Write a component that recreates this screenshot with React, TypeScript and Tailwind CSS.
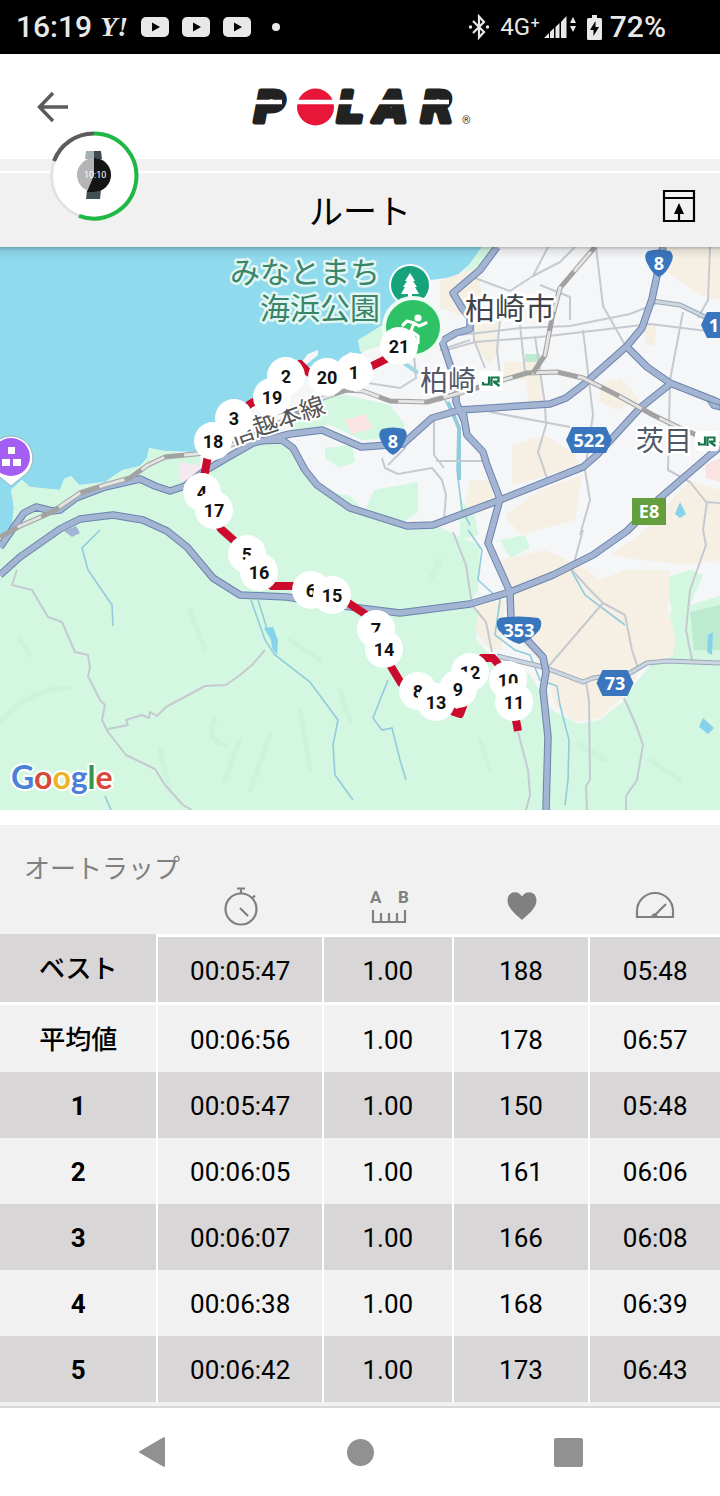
import React from "react";
import { twMerge } from "tailwind-merge";

type Lap = {
  label: string;
  time: string;
  distance: string;
  heartRate: string;
  pace: string;
};

const laps: Lap[] = [
  { label: "ベスト", time: "00:05:47", distance: "1.00", heartRate: "188", pace: "05:48" },
  { label: "平均値", time: "00:06:56", distance: "1.00", heartRate: "178", pace: "06:57" },
  { label: "1", time: "00:05:47", distance: "1.00", heartRate: "150", pace: "05:48" },
  { label: "2", time: "00:06:05", distance: "1.00", heartRate: "161", pace: "06:06" },
  { label: "3", time: "00:06:07", distance: "1.00", heartRate: "166", pace: "06:08" },
  { label: "4", time: "00:06:38", distance: "1.00", heartRate: "168", pace: "06:39" },
  { label: "5", time: "00:06:42", distance: "1.00", heartRate: "173", pace: "06:43" },
];

// in stacking order, later pins cover earlier ones
const pins: [label: string, x: number, y: number][] = [
  ["21", 399, 346],
  ["1", 354, 372],
  ["2", 286, 376],
  ["20", 327, 377],
  ["19", 272, 397],
  ["3", 234, 418],
  ["18", 213, 441],
  ["4", 202, 492],
  ["17", 214, 510],
  ["5", 247, 554],
  ["16", 259, 572],
  ["6", 311, 590],
  ["15", 332, 595],
  ["7", 376, 629],
  ["14", 384, 649],
  ["12", 470, 672],
  ["9", 458, 689],
  ["8", 418, 691],
  ["13", 436, 702],
  ["10", 508, 680],
  ["11", 514, 702],
];

const mainRoads = [
  "M0 547L14 527 24 513 36 507 52 511 60 510 76 498 105 487 140 479 155 486 170 491 185 486 203 472 225 459 253 443 290 434 322 430 361 447 403 444 432 418 460 410 550 404 566 398 583 385 627 346 642 328 652 299 663 247",
  "M253 441L282 440 293 448 305 470 317 485 350 508 407 526 433 525 500 500 583 467 597 455 640 408 670 384",
  "M627 347L647 367 670 383 713 400 720 403",
  "M0 575L20 557 60 529 80 519 113 515 143 520 167 531 187 547 213 578 240 595 287 597 343 606 400 613 470 604 510 592 553 575 593 555 627 531 660 498 710 455 720 447",
  "M463 412L467 435 483 452 487 465 500 499 488 543 510 592 511 620 530 643 543 657 546 672 543 690 548 737 546 810",
  "M497 247L480 270 453 293 462 308 470 318 470 329 456 333 442 341 450 365 456 380 456 402 464 420",
];

const cityStreets = [
  "M475 278L510 291 533 276 548 247",
  "M533 276L560 262 575 247",
  "M460 335L520 328 570 326 630 314 660 302",
  "M447 350L475 342 540 337 600 330 650 324 715 332",
  "M540 285L570 297 570 320",
  "M596 247L603 306 625 345",
  "M473 320L474 340 485 368",
  "M500 320L497 350 500 375",
  "M520 325L525 372",
  "M535 336L545 405 546 425 538 452 547 478",
  "M583 330L593 415 585 470 590 500 580 535",
  "M683 312L670 380 668 470 690 482 706 502 720 503",
  "M490 412L570 427",
  "M710 247L708 300 698 318",
  "M382 458L385 468 398 474 432 468 442 480 446 495 444 520",
  "M388 465L406 447",
  "M434 420L434 455 444 468",
  "M436 461L486 461",
  "M368 383L400 388 416 378 414 355",
  "M440 350L470 340",
  "M707 502L703 530 706 545 690 590 686 630 692 660",
  "M583 530L572 570 590 590 603 603 625 615 632 650 638 668",
  "M603 603L548 667",
  "M586 682L589 700 590 780 586 786 587 810",
  "M624 698L636 725 643 745 637 780 626 796 626 810",
  "M453 532L466 565 472 605 486 622 492 652",
  "M518 732L528 770 530 795 526 810",
  "M17 570L12 585 32 590 48 617 62 622 75 652 88 655 90 668 88 676 100 700 105 705 102 720 108 732 126 755 155 769 165 785 183 805 192 810",
  "M108 729L128 725 126 720 142 715 149 718 150 712 157 716 166 707 205 686 226 685 240 675 252 665 265 650",
];

const streams = [
  "M100 530L82 548 88 570 112 605 113 626",
  "M251 600L265 640 275 655 310 682 338 720 333 745 335 775 353 800",
  "M258 600L268 632",
  "M388 680L373 718 382 730 392 728 400 760 406 780",
  "M468 530L482 550 478 580 500 600 495 635 515 650 530 655 540 680 557 686 560 705 569 740 568 780 565 805",
  "M445 400L458 425 457 470 462 510 470 525",
  "M571 570L585 595 605 610 625 625",
  "M105 796L111 810",
];

const railways = [
  "M0 537L20 526 52 512 80 493 105 485 130 478 148 465 165 457 205 453 240 442 285 420 323 398 347 390 363 391 390 401 427 402 453 395 503 380 527 373 557 372 583 378 617 395 653 415 680 428 720 445",
  "M533 373L545 355 552 318 560 288 577 268 595 247",
];

const route =
  "M399 352L386 359 370 367 327 385 308 372 300 364 286 385 250 404 225 425 209 450 205 472 200 492 221 529 247 552 262 580 272 586 293 586 332 592 365 614 384 655 401 683 436 702 454 712 460 714 463 706 470 672 482 658 493 658 505 672 514 702 516 720 518 731";

function StatusBar() {
  return (
    <div className="flex h-[54px] items-center justify-between bg-black pl-4 pr-[54px] text-[#e8e8e8]">
      <div className="flex items-center gap-[13px]">
        <div className="flex items-center gap-2">
          <span className="text-[30px] leading-none font-medium">16:19</span>
          <span className="font-['Liberation_Serif',serif] text-[28px] leading-none font-bold italic">
            Y!
          </span>
        </div>
        <VideoIcon />
        <VideoIcon />
        <VideoIcon />
        <span className="ml-2 h-2 w-2 rounded-full bg-[#e8e8e8]" />
      </div>
      <div className="flex items-center gap-[10px]">
        <svg width="22" height="26" viewBox="0 0 22 26" fill="none" stroke="currentColor" strokeWidth="2.2">
          <path d="M5 7L16 18 11 23.500V2.500L16 8 5 19" />
          <circle cx="2.500" cy="13" r="1.700" fill="currentColor" stroke="none" />
          <circle cx="19.500" cy="13" r="1.700" fill="currentColor" stroke="none" />
        </svg>
        <div className="flex items-center gap-1">
          <span className="text-[24px] leading-none">4G⁺</span>
          <svg width="33" height="24" viewBox="0 0 33 24" fill="currentColor">
            <path d="M0 23L5 18V23ZM6 17L10 13V23H6ZM11.500 12L15.500 8V23H11.500ZM17 7L22.500 1V23H17ZM26 8L29 2 32 8ZM26 11H32L29 17Z" />
          </svg>
        </div>
        <div className="flex items-center gap-2">
          <svg width="15" height="25" viewBox="0 0 15 25">
            <path d="M5 0H10V3H13.500Q15 3 15 4.500V23.500Q15 25 13.500 25H1.500Q0 25 0 23.500V4.500Q0 3 1.500 3H5Z" fill="currentColor" />
            <path d="M8.500 6L3 15H6.500V21L12 12H8.500Z" fill="#000" />
          </svg>
          <span className="text-[30px] leading-none font-medium">72%</span>
        </div>
      </div>
    </div>
  );
}

function VideoIcon() {
  return (
    <svg width="28" height="20" viewBox="0 0 28 20">
      <rect width="28" height="20" rx="5" fill="#e8e8e8" />
      <path d="M11 5.500L19 10 11 14.500Z" fill="#000" />
    </svg>
  );
}

function PolarLogo() {
  return (
    <svg width="232" height="64" viewBox="244 74 232 64" role="img" aria-label="POLAR">
      <g
        className="font-['DejaVu_Sans',sans-serif] text-[42px] font-bold italic"
        fill="#222"
        stroke="#222"
        strokeWidth="5"
        strokeLinejoin="round"
      >
        <text x="254" y="121">P</text>
        <text x="337" y="121">L</text>
        <text x="375" y="121">A</text>
        <text x="421" y="121">R</text>
      </g>
      <circle cx="315.500" cy="106" r="18.500" fill="#e8173a" />
      <path d="M252 101H282M296 101H335M338 101H413M419 101H449" stroke="#fff" strokeWidth="4.500" />
      <text x="462" y="123" className="text-[11px]" fill="#333">
        ®
      </text>
    </svg>
  );
}

function WatchBadge() {
  return (
    <svg
      className="absolute left-[48px] top-[130px]"
      width="92"
      height="92"
      viewBox="0 0 92 92"
      fill="none"
    >
      <circle cx="46" cy="46" r="44" fill="#fff" />
      <circle cx="46" cy="46" r="42.500" stroke="#e2e2e2" strokeWidth="3" />
      <path d="M46 3.500A42.500 42.500 0 1 1 31 85.800" stroke="#1fb845" strokeWidth="4" />
      <path d="M6 31A42.500 42.500 0 0 1 46 3.500" stroke="#5c5c5c" strokeWidth="4" />
      <path d="M38 21H46V29H37Z" fill="#a4b0b1" />
      <path d="M46 21H53L54 29H46Z" fill="#3d4c50" />
      <path d="M39 60H53L52 69H38Z" fill="#3f5055" />
      <circle cx="46" cy="45" r="17" fill="#b5b5b5" />
      <path d="M46 28A17 17 0 0 1 46 62H39L46 45Z" fill="#151515" />
      <text x="36" y="48" className="text-[9px]" fill="#fff">
        10:10
      </text>
    </svg>
  );
}

function HexShield({ x, y, width, label }: { x: number; y: number; width: number; label: string }) {
  const w = width / 2;
  return (
    <g>
      <path
        d={`M${x - w} ${y}L${x - w + 6} ${y - 13}H${x + w - 6}L${x + w} ${y}L${x + w - 6} ${y + 13}H${x - w + 6}Z`}
        fill="#3a76bd"
      />
      <ShieldText x={x} y={y + 7} label={label} />
    </g>
  );
}

function RouteShield({ x, y, width, label }: { x: number; y: number; width: number; label: string }) {
  const w = width / 2;
  return (
    <g>
      <path
        d={`M${x - w + 3} ${y - 12}Q${x} ${y - 15} ${x + w - 3} ${y - 12}Q${x + w + 2} ${y - 8} ${x + w - 2} ${y}Q${x + w * 0.5} ${y + 11} ${x} ${y + 14}Q${x - w * 0.5} ${y + 11} ${x - w + 2} ${y}Q${x - w - 2} ${y - 8} ${x - w + 3} ${y - 12}Z`}
        fill="#3a76bd"
      />
      <ShieldText x={x} y={y + 7} label={label} />
    </g>
  );
}

function ShieldText({ x, y, label }: { x: number; y: number; label: string }) {
  return (
    <text x={x} y={y} textAnchor="middle" fill="#fff" className="font-['Noto_Sans',sans-serif] text-[18px] font-bold">
      {label}
    </text>
  );
}

function StationMark({ x, y }: { x: number; y: number }) {
  return (
    <g>
      <rect x={x - 12} y={y - 10} width="24" height="20" rx="4" fill="#fff" />
      <path
        d={`M${x - 8} ${y + 1}V${y + 3.5}H${x - 2}V${y - 4.5}M${x + 0.5} ${y + 5}V${y - 3.5}H${x + 7.5}V${y + 0.5}H${x + 2}M${x + 3} ${y + 1}L${x + 8.5} ${y + 5}`}
        fill="none"
        stroke="#14784a"
        strokeWidth="2.2"
      />
    </g>
  );
}

function RouteMap() {
  return (
    <svg className="block h-auto w-full" viewBox="0 247 720 563">
      <defs>
        <linearGradient id="topShade" x1="0" y1="0" x2="0" y2="1">
          <stop offset="0" stopColor="#000" stopOpacity="0.25" />
          <stop offset="0.3" stopColor="#000" stopOpacity="0.08" />
          <stop offset="1" stopColor="#000" stopOpacity="0" />
        </linearGradient>
      </defs>
      <rect y="247" width="720" height="563" fill="#90daee" />
      {/* land */}
      <path
        d="M0 538L12 525 14 507 11 490 22 480 30 487 60 490 64 479 71 476 79 485 105 482 115 475 123 470 140 466 147 458 149 448 165 451 195 452 212 440 230 418 262 392 278 358 284 366 300 364 308 354 318 350 318 355 302 368 340 362 350 352 360 355 366 345 390 320 410 300 430 280 455 277 470 264 482 247H720V810H0Z"
        fill="#f5f6f8"
      />
      <path
        d="M0 538L12 525 14 507 11 490 22 480 30 487 60 490 64 479 71 476 79 485 105 482 115 475 123 470 140 466 147 458 149 448 165 451 200 455 200 472 220 466 250 443 284 442 300 465 325 491 350 496 362 508 385 520 440 527 455 535 480 545 478 590 472 600 478 615 476 640 490 655 530 675 552 710 578 724 600 720 625 700 634 685 650 666 674 655 664 630 672 610 664 578 690 570 703 575 690 605 720 596V810H0Z"
        fill="#d3f7e1"
      />
      <g fill="#d3f7e1">
        <path d="M482 247H500L478 272 460 288 458 280Z" />
        <path d="M358 340L384 324 384 345 360 352Z" />
        <path d="M310 398L345 395 390 405 405 425 400 438 362 440 330 425 290 430Z" />
        <path d="M374 490L418 482 418 512 400 524 366 508Z" />
        <path d="M325 448L352 445 355 462 340 468 325 458Z" />
        <path d="M460 500L475 515 478 535 460 540Z" />
        <path d="M500 540L525 535 530 548 510 558Z" />
        <path d="M525 354H540V370H525Z" fill="#bdebd0" />
        <path d="M690 612L720 605V650H694Z" fill="#bdebd0" />
      </g>
      <g fill="#f6f0e4">
        <path d="M440 280L478 268 482 295 460 315 440 308Z" />
        <path d="M472 325L500 322 500 350 490 365 474 345Z" />
        <path d="M504 362H542V402H528L526 380 504 378Z" />
        <path d="M664 247H720V300L700 295 664 270Z" />
        <path d="M645 325L656 325 655 345 645 345Z" />
        <path d="M600 385L620 378 640 400 618 410 600 402Z" />
        <path d="M512 445L545 435 575 455 580 465 512 486Z" />
        <path d="M540 490L582 475 575 520 520 535 505 515Z" />
        <path d="M470 480L490 480 495 500 480 515 465 505Z" />
        <path d="M500 560L545 550 580 565 600 580 625 570 670 570 668 610 676 640 672 655 640 668 630 690 600 718 575 722 555 705 545 668 510 630 514 595Z" />
        <path d="M640 535L690 480 720 490V560L690 565 640 560 610 555Z" />
        <path d="M478 605L505 600 502 650 488 648 476 632Z" />
      </g>
      <g fill="#fbe3e4">
        <path d="M345 420L365 414 373 428 352 434Z" />
        <path d="M705 465L720 458V482L706 478Z" />
        <path d="M179 462L200 466 200 478 180 482Z" fill="#f6e8ef" />
      </g>
      {/* forest relief */}
      <g fill="none" stroke="#c3ecd6" strokeWidth="5" strokeLinecap="round" opacity="0.35">
        <path d="M2 720Q30 688 70 688M20 640L30 655M190 610L205 650M215 720Q205 740 225 745M240 740L225 780M270 735L250 790M300 710L310 770M340 690L350 720M290 640L320 660M440 560L430 580M160 750L170 790M650 760L680 780M480 740L490 770M580 745L605 760" />
      </g>
      <g fill="none" stroke="#92cbdc" strokeWidth="1.600">
        {streams.map((d) => (
          <path key={d} d={d} />
        ))}
        <path d="M448 402L459 428 459 480" strokeWidth="4" />
        <path d="M404 363L418 373" strokeWidth="4" stroke="#9bdbe6" />
      </g>
      <g fill="#85d2ea">
        <path d="M264 628L273 627 278 640 277 655 272 648 271 640Z" />
        <path d="M680 502L686 514 680 518 675 514Z" />
        <path d="M703 718L714 728 708 734 699 727Z" />
        <path d="M708 635L713 632 712 655 707 652Z" />
      </g>
      <g fill="none" stroke="#c5cad1" strokeWidth="2" strokeLinejoin="round">
        {cityStreets.map((d) => (
          <path key={d} d={d} />
        ))}
      </g>
      <g fill="none" strokeLinejoin="round">
        <path d="M497 656L543 667 583 682 593 678 630 673 647 663 667 661 720 663M652 301L680 305 705 317" stroke="#9aa8b8" strokeWidth="5" />
        <path d="M497 656L543 667 583 682 593 678 630 673 647 663 667 661 720 663M652 301L680 305 705 317" stroke="#ccd6e0" strokeWidth="3" />
      </g>
      <g fill="none" strokeLinejoin="round">
        <g stroke="#6c83ad" strokeWidth="7.500">
          {mainRoads.map((d) => (
            <path key={d} d={d} />
          ))}
        </g>
        <g stroke="#a3b5d3" strokeWidth="5.500">
          {mainRoads.map((d) => (
            <path key={d} d={d} />
          ))}
        </g>
        <path d="M64 531L72 537 80 533 76 526Z" fill="#a3b5d3" />
        <path d="M707 401L720 405V410L712 408Z" fill="#a3b5d3" stroke="#6c83ad" />
      </g>
      <g fill="none" strokeLinejoin="round">
        {railways.map((d) => (
          <g key={d}>
            <path d={d} stroke="#a2a2a2" strokeWidth="5" />
            <path d={d} stroke="#e3e3e3" strokeWidth="3" />
            <path d={d} stroke="#a2a2a2" strokeWidth="4" strokeDasharray="20 26" />
          </g>
        ))}
      </g>

      <g
        className="font-['Noto_Sans_CJK_JP',sans-serif] text-[30px]"
        stroke="#fff"
        strokeWidth="5"
        strokeLinejoin="round"
        paintOrder="stroke"
        fill="#404348"
      >
        <g fill="#3a8468" stroke="#e2f7f3" textAnchor="end">
          <text x="380" y="283">みなとまち</text>
          <text x="380" y="319">海浜公園</text>
        </g>
        <text x="465" y="319">柏崎市</text>
        <g className="text-[28px]" fill="#515866">
          <text x="420" y="391">柏崎</text>
          <text x="636" y="451">茨目</text>
        </g>
        <text
          className="text-[25px]"
          transform="rotate(-19 284 420)"
          x="227"
          y="427"
          fill="#555"
          strokeWidth="4"
        >
          信越本線
        </text>
      </g>
      <StationMark x={491} y={381} />
      <StationMark x={707} y={441} />

      <RouteShield x={393} y={441} width={28} label="8" />
      <RouteShield x={659} y={263} width={28} label="8" />
      <RouteShield x={519} y={630} width={45} label="353" />
      <HexShield x={589} y={440} width={46} label="522" />
      <HexShield x={615} y={683} width={37} label="73" />
      <HexShield x={719} y={325} width={36} label="11" />
      <rect x="632" y="498" width="34" height="27" fill="#659e3c" />
      <ShieldText x={649} y={518} label="E8" />

      {/* park, start and sight markers */}
      <circle cx="410" cy="285" r="21" fill="#fff" />
      <circle cx="410" cy="285" r="19" fill="#16a37b" />
      <path d="M410 273L415 281H413L417 287H415L419 294H412V298H408V294H401L405 287H403L407 281H405Z" fill="#fff" />
      <circle cx="413" cy="327" r="31" fill="#eefaf2" />
      <circle cx="413" cy="327" r="27" fill="#2fc165" />
      <g fill="none" stroke="#fff" strokeWidth="3.200" strokeLinecap="round" strokeLinejoin="round">
        <circle cx="418" cy="318" r="2" fill="#fff" />
        <path d="M403 325L407 321 414 323 419 326 426 323M414 323L411 331 418 336V343M411 331L408 336 401 338" />
      </g>
      <path d="M11 436A22 22 0 0 1 27 473L11 486-5 473A22 22 0 0 1 11 436Z" fill="#fff" stroke="#9ab3bd" />
      <circle cx="11" cy="457" r="19" fill="#a45ef4" />
      <path d="M8 447H15V454H8ZM2 459H10V466H2ZM13 459H21V466H13Z" fill="#fff" />

      <path d={route} fill="none" stroke="#cb0b2b" strokeWidth="8" strokeLinejoin="round" />
      {pins.map(([label, x, y]) => (
        <g key={label}>
          <circle cx={x} cy={y} r="19" fill="#fff" />
          <text x={x} y={y + 7} textAnchor="middle" fill="#111" className="text-[18px] font-bold">
            {label}
          </text>
        </g>
      ))}

      <text
        x="11"
        y="789"
        className="font-[Lato,sans-serif] text-[32px] font-bold"
        stroke="#fff"
        strokeWidth="4"
        strokeLinejoin="round"
        paintOrder="stroke"
      >
        <tspan fill="#4a80d8">G</tspan>
        <tspan fill="#d64a3c">o</tspan>
        <tspan fill="#eab423">o</tspan>
        <tspan fill="#4a80d8">g</tspan>
        <tspan fill="#35954f">l</tspan>
        <tspan fill="#d64a3c">e</tspan>
      </text>
      <rect y="247" width="720" height="12" fill="url(#topShade)" />
    </svg>
  );
}

function StopwatchIcon() {
  return (
    <svg className="mx-auto" width="34" height="40" viewBox="0 0 34 40" fill="none" stroke="#808080" strokeWidth="2.200">
      <circle cx="17" cy="23" r="15.500" />
      <path d="M17 7.500V3M13 2.500H21M28.500 12L31 9.500M16 22L24 30" />
    </svg>
  );
}

function DistanceIcon() {
  return (
    <svg className="mx-auto" width="40" height="40" viewBox="0 0 40 40" fill="none">
      <text x="1" y="17" className="text-[17px] font-bold" fill="#808080">A</text>
      <text x="29" y="17" className="text-[17px] font-bold" fill="#808080">B</text>
      <path d="M4 24V36H36V24M12 27V36M20 27V36M28 27V36" stroke="#808080" strokeWidth="2.200" />
    </svg>
  );
}

function HeartIcon() {
  return (
    <svg className="mx-auto" width="32" height="40" viewBox="0 0 32 40">
      <path d="M16 34C12 30 1.500 23 1.500 14.500 1.500 5 12 3.500 16 10.500 20 3.500 30.500 5 30.500 14.500 30.500 23 20 30 16 34Z" fill="#808080" />
    </svg>
  );
}

function PaceIcon() {
  return (
    <svg className="mx-auto" width="40" height="40" viewBox="0 0 40 40" fill="none" stroke="#808080" strokeWidth="2.200">
      <path d="M2 31V25A18 18 0 0 1 38 25V31ZM19 30L31 18" />
      <path d="M16 31Q17 27 21 27L23 31Z" fill="#808080" stroke="none" />
    </svg>
  );
}

function LapTable() {
  return (
    <section className="border-b-2 border-[#d9d6d7] bg-[#f1f1f1] pt-7 pb-1">
      <h2 id="laps" className="pl-6 text-[26px] leading-8 text-[#808080]">
        オートラップ
      </h2>
      <table
        aria-labelledby="laps"
        className="w-full table-fixed border-separate border-spacing-0 text-center text-[26px] leading-8 text-black"
      >
        <colgroup>
          <col className="w-[22%]" />
          <col className="w-[23%]" />
          <col className="w-[18%]" />
          <col className="w-[19%]" />
          <col className="w-[18%]" />
        </colgroup>
        <thead>
          <tr className="h-[49px] [&>th]:pb-2">
            <td />
            <th aria-label="タイム"><StopwatchIcon /></th>
            <th aria-label="距離"><DistanceIcon /></th>
            <th aria-label="心拍数"><HeartIcon /></th>
            <th aria-label="ペース"><PaceIcon /></th>
          </tr>
        </thead>
        <tbody>
          {laps.map((lap, i) => (
            <tr
              key={lap.label}
              className={twMerge(
                "h-[66px] [&>*]:pt-[2px]",
                i % 2 === 0 ? "bg-[#d9d6d7]" : null,
                i === 0
                  ? "h-[71px] [&>*]:border-b-3 [&>td]:border-t-3"
                  : null,
                i === 1 ? "h-[67px]" : null,
              )}
            >
              <th
                scope="row"
                className={twMerge("border-r-2 border-white font-bold", i < 2 ? "font-medium" : null)}
              >
                {lap.label}
              </th>
              <td className="border-r-2 border-white">{lap.time}</td>
              <td className="border-r-2 border-white">{lap.distance}</td>
              <td className="border-r-2 border-white">{lap.heartRate}</td>
              <td className="border-white">{lap.pace}</td>
            </tr>
          ))}
        </tbody>
      </table>
    </section>
  );
}

export default function App() {
  return (
    <div className="relative min-h-screen bg-white font-[Roboto,'Noto_Sans_CJK_JP',sans-serif]">
      <StatusBar />
      <header className="grid h-[105px] grid-cols-[1fr_auto_1fr] items-center px-9">
        <button type="button" aria-label="戻る" className="w-fit">
          <svg width="34" height="32" viewBox="0 0 34 32" fill="none" stroke="#5c5c5c" strokeWidth="3.500">
            <path d="M32 16H4M17 2L3.500 16 17 30" />
          </svg>
        </button>
        <PolarLogo />
      </header>
      <div className="h-3 bg-[#f1f1f1]" />
      <div className="mt-[2px] grid h-[74px] grid-cols-[1fr_auto_1fr] items-center bg-[#f1f1f1] px-6">
        <h1 className="col-start-2 pt-1 text-[34px] leading-10 text-black">ルート</h1>
        <button type="button" aria-label="共有" className="-mt-2 w-fit justify-self-end">
          <svg width="34" height="34" viewBox="0 0 34 34" fill="none" stroke="#000" strokeWidth="2.200">
            <path d="M2 2H32V32H2ZM2 9H32M17 32V24" />
            <path d="M17 14L22 25H12Z" fill="#000" stroke="none" />
          </svg>
        </button>
      </div>
      <WatchBadge />
      <RouteMap />
      <div className="h-[15px]" />
      <LapTable />
      <nav className="flex h-[88px] items-center justify-around px-12">
        <button type="button" aria-label="戻る" className="flex w-52 justify-center">
          <svg width="28" height="32" viewBox="0 0 28 32">
            <path d="M26 2V30L2 16Z" fill="#919191" stroke="#919191" strokeWidth="2" strokeLinejoin="round" />
          </svg>
        </button>
        <button type="button" aria-label="ホーム" className="flex w-52 justify-center">
          <span className="h-[27px] w-[27px] rounded-full bg-[#919191]" />
        </button>
        <button type="button" aria-label="履歴" className="flex w-52 justify-center">
          <span className="h-[29px] w-[29px] rounded-xs bg-[#919191]" />
        </button>
      </nav>
    </div>
  );
}
